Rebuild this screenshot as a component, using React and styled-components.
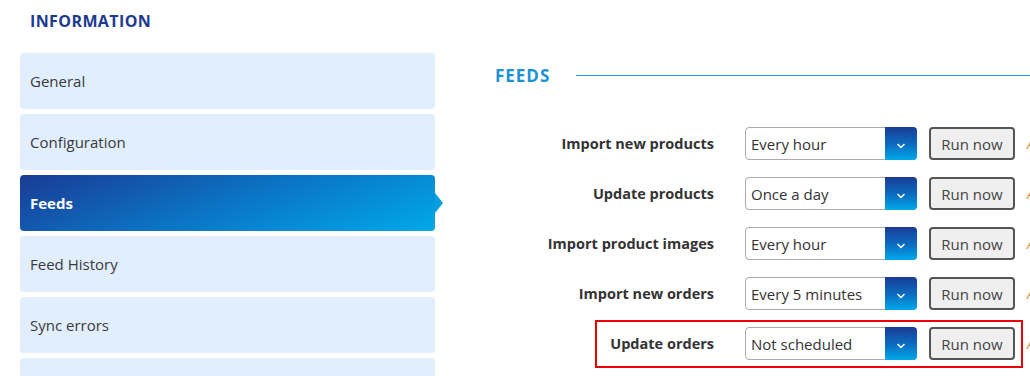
import React, {useState} from 'react'
import styled, {createGlobalStyle} from 'styled-components'

const menu = ['General', 'Configuration', 'Feeds', 'Feed History', 'Sync errors', 'Support']

const feeds = [
  {label: 'Import new products', value: 'Every hour'},
  {label: 'Update products', value: 'Once a day'},
  {label: 'Import product images', value: 'Every hour'},
  {label: 'Import new orders', value: 'Every 5 minutes'},
  {label: 'Update orders', value: 'Not scheduled', highlight: true},
]

const options = ['Not scheduled', 'Every 5 minutes', 'Every hour', 'Once a day']

function FeedRow({feed}) {
  const [value, setValue] = useState(feed.value)

  return (
    <Row highlight={feed.highlight}>
      <Label>{feed.label}</Label>
      <SelectWrap>
        <Select value={value} onChange={(e) => setValue(e.target.value)}>
          {options.map((o) => <option key={o}>{o}</option>)}
        </Select>
        <Caret>
          <svg width="10" height="6" viewBox="0 0 10 6">
            <path d="M1.5 1l3.5 3.5L8.5 1" fill="none" stroke="#fff" strokeWidth="1.4" />
          </svg>
        </Caret>
      </SelectWrap>
      <RunButton>Run now</RunButton>
      <LastRun>Active</LastRun>
    </Row>
  )
}

function App() {
  const [active, setActive] = useState('Feeds')

  return (
    <>
      <GlobalStyle />
      <Page>
        <Sidebar>
          <Title>INFORMATION</Title>
          <Menu>
            {menu.map((item) => (
              <MenuItem key={item} active={item === active} onClick={() => setActive(item)}>
                {item}
              </MenuItem>
            ))}
          </Menu>
        </Sidebar>

        <Main>
          <SectionHeader>
            <SectionTitle>FEEDS</SectionTitle>
            <Rule />
          </SectionHeader>
          <Rows>
            {feeds.map((f) => <FeedRow key={f.label} feed={f} />)}
          </Rows>
        </Main>
      </Page>
    </>
  )
}

export default App

const GlobalStyle = createGlobalStyle`
  body {
    margin: 0;
    background: #fff;
    font-family: "Open Sans", "Liberation Sans", sans-serif;
    color: #333;
  }
`
const Page = styled.div`
  display: flex;
  width: 1030px;
  height: 376px;
  overflow: hidden;
`
const Sidebar = styled.div`
  width: 415px;
  margin-left: 20px;
  flex-shrink: 0;
`
const Title = styled.div`
  font-size: 16px;
  font-weight: 700;
  color: #1d3a8f;
  padding: 10px 0 0 10px;
  height: 53px;
  box-sizing: border-box;
  letter-spacing: 0.4px;
`
const Menu = styled.div`
  display: flex;
  flex-direction: column;
  gap: 5px;
`
const MenuItem = styled.div`
  position: relative;
  height: 56px;
  flex-shrink: 0;
  display: flex;
  align-items: center;
  padding-left: 10px;
  border-radius: 4px;
  font-size: 15px;
  cursor: pointer;
  background: ${(p) => (p.active ? 'linear-gradient(160deg, #1a3b95 0%, #0b74c4 50%, #00a9e9 100%)' : '#e1eefd')};
  color: ${(p) => (p.active ? '#fff' : '#3a3a3a')};
  font-weight: ${(p) => (p.active ? 700 : 400)};

  &::after {
    content: '';
    display: ${(p) => (p.active ? 'block' : 'none')};
    position: absolute;
    right: -8px;
    top: 50%;
    margin-top: -10px;
    border-top: 10px solid transparent;
    border-bottom: 10px solid transparent;
    border-left: 8px solid #05a0e2;
  }
`
const Main = styled.div`
  flex: 1;
  margin-left: 60px;
  min-width: 0;
`
const SectionHeader = styled.div`
  display: flex;
  align-items: center;
  margin-top: 64px;
  height: 22px;
`
const SectionTitle = styled.div`
  font-size: 17px;
  font-weight: 700;
  color: #1b92d8;
  letter-spacing: 1px;
`
const Rule = styled.div`
  flex: 1;
  height: 1px;
  background: #1a9ae0;
  margin-left: 26px;
`
const Rows = styled.div`
  display: flex;
  flex-direction: column;
  gap: 17px;
  margin-top: 41px;
`
const Row = styled.div`
  position: relative;
  display: flex;
  align-items: center;
  height: 33px;

  &::before {
    content: '';
    display: ${(p) => (p.highlight ? 'block' : 'none')};
    position: absolute;
    left: 100px;
    top: -7px;
    width: 428px;
    height: 48px;
    box-sizing: border-box;
    border: 2px solid #ee0000;
    pointer-events: none;
  }
`
const Label = styled.div`
  width: 219px;
  flex-shrink: 0;
  text-align: right;
  font-size: 14.5px;
  font-weight: 700;
  color: #333;
  white-space: nowrap;
`
const SelectWrap = styled.div`
  position: relative;
  flex-shrink: 0;
  height: 33px;
  margin-left: 31px;
  width: 172px;
`
const Select = styled.select`
  appearance: none;
  width: 100%;
  height: 100%;
  box-sizing: border-box;
  border: 1px solid #aaa;
  border-radius: 4px;
  background: #fff;
  padding: 0 36px 0 5px;
  font-family: inherit;
  font-size: 15px;
  color: #333;
  outline: none;
`
const Caret = styled.div`
  position: absolute;
  right: 0;
  top: 0;
  width: 32px;
  height: 33px;
  border-radius: 0 4px 4px 0;
  background: linear-gradient(180deg, #1a3b95 0%, #0a6fc2 55%, #00a9e9 100%);
  display: flex;
  align-items: flex-end;
  justify-content: center;
  padding-bottom: 11px;
  box-sizing: border-box;
  pointer-events: none;
`
const RunButton = styled.button`
  flex-shrink: 0;
  margin-left: 12px;
  width: 86px;
  height: 33px;
  box-sizing: border-box;
  border: 2px solid #555;
  border-radius: 4px;
  background: #efefef;
  font-family: inherit;
  font-size: 15px;
  color: #444;
  padding: 0;
  cursor: pointer;
`
const LastRun = styled.div`
  margin-left: 12px;
  font-size: 13px;
  font-style: italic;
  color: #d9822b;
  white-space: nowrap;
`
